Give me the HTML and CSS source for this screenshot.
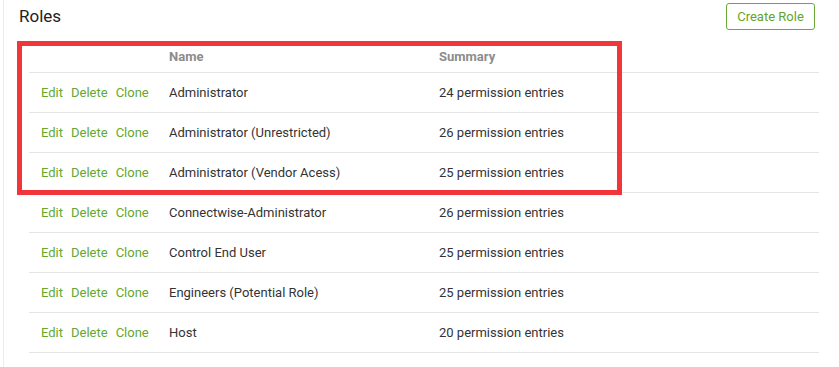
FILE: index.html
```html
<!DOCTYPE html>
<html lang="en">
<head>
<meta charset="utf-8">
<title>Roles</title>
<link rel="stylesheet" href="styles.css">
</head>
<body>
<div class="page">
  <div class="header">
    <h1 class="title">Roles</h1>
    <button class="btn-create">Create Role</button>
  </div>
  <div class="table">
    <div class="row head">
      <div class="cell"></div>
      <div class="cell">Name</div>
      <div class="cell">Summary</div>
    </div>
    <div class="row">
      <div class="cell actions"><a>Edit</a><a>Delete</a><a>Clone</a></div>
      <div class="cell">Administrator</div>
      <div class="cell">24 permission entries</div>
    </div>
    <div class="row">
      <div class="cell actions"><a>Edit</a><a>Delete</a><a>Clone</a></div>
      <div class="cell">Administrator (Unrestricted)</div>
      <div class="cell">26 permission entries</div>
    </div>
    <div class="row">
      <div class="cell actions"><a>Edit</a><a>Delete</a><a>Clone</a></div>
      <div class="cell">Administrator (Vendor Acess)</div>
      <div class="cell">25 permission entries</div>
    </div>
    <div class="row">
      <div class="cell actions"><a>Edit</a><a>Delete</a><a>Clone</a></div>
      <div class="cell">Connectwise-Administrator</div>
      <div class="cell">26 permission entries</div>
    </div>
    <div class="row">
      <div class="cell actions"><a>Edit</a><a>Delete</a><a>Clone</a></div>
      <div class="cell">Control End User</div>
      <div class="cell">25 permission entries</div>
    </div>
    <div class="row">
      <div class="cell actions"><a>Edit</a><a>Delete</a><a>Clone</a></div>
      <div class="cell">Engineers (Potential Role)</div>
      <div class="cell">25 permission entries</div>
    </div>
    <div class="row">
      <div class="cell actions"><a>Edit</a><a>Delete</a><a>Clone</a></div>
      <div class="cell">Host</div>
      <div class="cell">20 permission entries</div>
    </div>
  </div>
  <div class="highlight"></div>
</div>
</body>
</html>
```

FILE: styles.css
```css
html, body {
  margin: 0;
  padding: 0;
  background: #ffffff;
}

body {
  font-family: Roboto, "Liberation Sans", Arial, sans-serif;
  font-size: 13px;
  color: #333333;
  overflow: hidden;
  height: 367px;
}

.page {
  position: relative;
  margin-left: 3px;
  border-left: 1px solid #ececec;
  height: 367px;
  box-sizing: border-box;
}

.header {
  display: flex;
  align-items: center;
  justify-content: space-between;
  padding: 3px 24px 0 15px;
  height: 30px;
  box-sizing: border-box;
}

.title {
  margin: 0;
  font-size: 17px;
  font-weight: 400;
  color: #222222;
  line-height: 27px;
}

.btn-create {
  height: 27px;
  width: 89px;
  box-sizing: border-box;
  border: 1px solid #6aaa36;
  border-radius: 3px;
  background: #ffffff;
  color: #5fa52e;
  font-family: Roboto, "Liberation Sans", Arial, sans-serif;
  font-size: 13px;
  padding: 0;
}

.table {
  margin: 11px 20px 0 25px;
}

.row {
  display: grid;
  grid-template-columns: 140px 270px 1fr;
  align-items: center;
  height: 40px;
  box-sizing: border-box;
  border-bottom: 1px solid #e4e4e4;
}

.row.head {
  height: 32px;
  font-weight: 700;
  color: #8c8c8c;
}

.cell {
  white-space: nowrap;
}

.actions {
  display: flex;
  gap: 8px;
  padding-left: 12px;
}

.actions a {
  color: #65a82f;
  cursor: pointer;
}

.highlight {
  position: absolute;
  left: 13px;
  top: 41px;
  width: 605px;
  height: 154px;
  box-sizing: border-box;
  border: 5px solid #f2343b;
  pointer-events: none;
}
```
